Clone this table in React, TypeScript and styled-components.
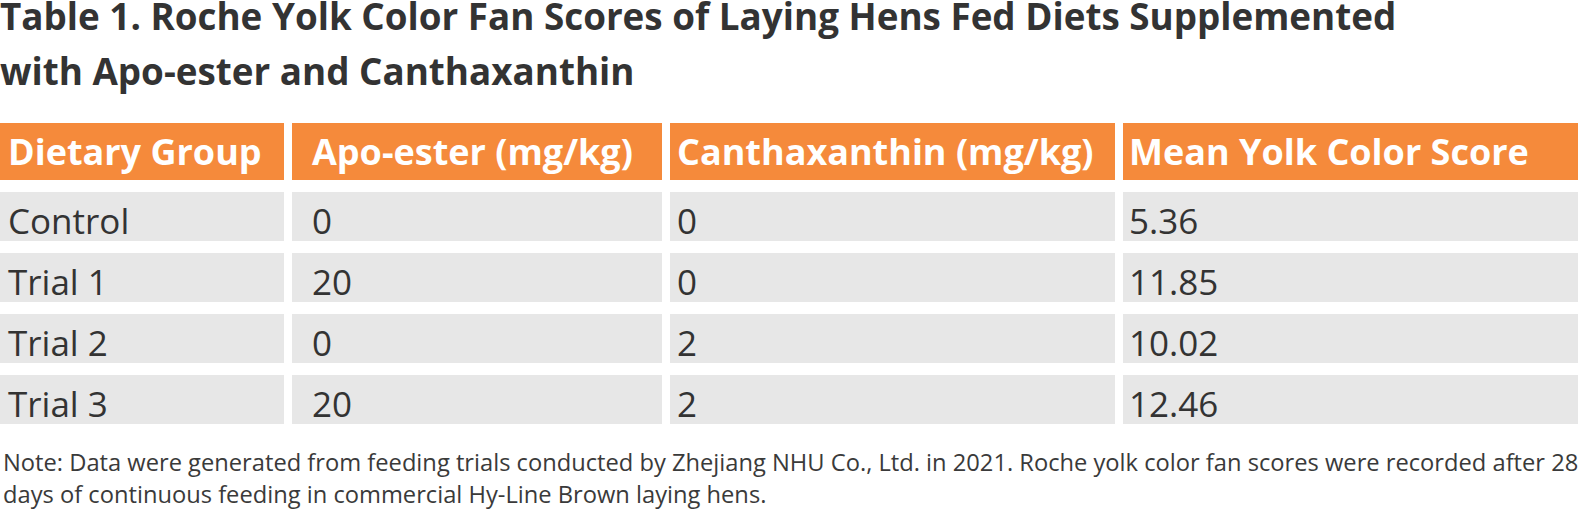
import React from "react";
import styled, { createGlobalStyle } from "styled-components";

const GlobalStyle = createGlobalStyle`
  html, body {
    margin: 0;
    padding: 0;
    background: #ffffff;
  }
  body {
    font-family: "Open Sans", "Noto Sans", "Liberation Sans", sans-serif;
    color: #333333;
  }
`;

const Page = styled.div`
  width: 1585px;
  overflow: hidden;
`;

const Title = styled.h2`
  margin: -11px 0 0 0;
  max-width: 1420px;
  font-size: 36.8px;
  line-height: 55px;
  font-weight: 700;
  color: #333333;
`;

const Grid = styled.div`
  margin-top: 24px;
  display: grid;
  grid-template-columns: 284px 370px 445px 455px;
  column-gap: 8px;
  row-gap: 12px;
`;

const HeadCell = styled.div<{ $pad?: number }>`
  height: 57px;
  box-sizing: border-box;
  display: flex;
  align-items: center;
  padding-left: ${(p) => p.$pad ?? 7}px;
  background: #f58a3b;
  color: #ffffff;
  font-size: 36px;
  font-weight: 700;
  white-space: nowrap;
`;

const Cell = styled.div<{ $pad?: number }>`
  height: 49px;
  box-sizing: border-box;
  padding: 11px 0 0 ${(p) => p.$pad ?? 7}px;
  background: #e7e7e7;
  color: #333333;
  font-size: 35px;
  line-height: 35px;
  white-space: nowrap;
`;

const Note = styled.p`
  margin: 22px 0 0 3px;
  max-width: 1582px;
  font-size: 23.7px;
  line-height: 32px;
  color: #3a3a3a;
`;

const headers = [
  "Dietary Group",
  "Apo-ester (mg/kg)",
  "Canthaxanthin (mg/kg)",
  "Mean Yolk Color Score",
];

const rows = [
  ["Control", "0", "0", "5.36"],
  ["Trial 1", "20", "0", "11.85"],
  ["Trial 2", "0", "2", "10.02"],
  ["Trial 3", "20", "2", "12.46"],
];

const pads = [8, 20, 7, 6];

export default function App() {
  return (
    <Page>
      <GlobalStyle />
      <Title>
        Table 1. Roche Yolk Color Fan Scores of Laying Hens Fed Diets
        Supplemented with Apo-ester and Canthaxanthin
      </Title>
      <Grid>
        {headers.map((h, i) => (
          <HeadCell key={h} $pad={pads[i]}>
            {h}
          </HeadCell>
        ))}
        {rows.map((row, r) =>
          row.map((v, c) => (
            <Cell key={`${r}-${c}`} $pad={pads[c]}>
              {v}
            </Cell>
          ))
        )}
      </Grid>
      <Note>
        Note: Data were generated from feeding trials conducted by Zhejiang NHU
        Co., Ltd. in 2021. Roche yolk color fan scores were recorded after 28
        days of continuous feeding in commercial Hy-Line Brown laying hens.
      </Note>
    </Page>
  );
}
